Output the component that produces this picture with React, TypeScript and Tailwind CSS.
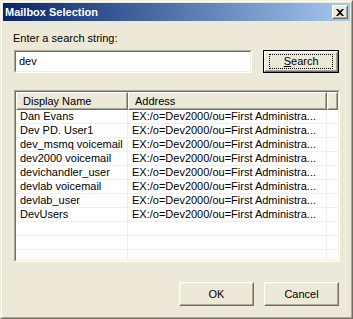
const rows = [
  'Dan Evans',
  'Dev PD. User1',
  'dev_msmq voicemail',
  'dev2000 voicemail',
  'devichandler_user',
  'devlab voicemail',
  'devlab_user',
  'DevUsers',
];

function Raised({ children, className = '' }: { children?: React.ReactNode; className?: string }) {
  // classic 3D raised edge: white / dark outer, light / shadow inner
  return (
    <div className={`border border-t-white border-l-white border-b-[#716f64] border-r-[#716f64] ${className}`}>
      <div className="flex h-full w-full items-center justify-center border border-t-[#f1efe2] border-l-[#f1efe2] border-b-[#aca899] border-r-[#aca899] bg-[#ece9d8]">
        {children}
      </div>
    </div>
  );
}

function Sunken({ children, className = '' }: { children?: React.ReactNode; className?: string }) {
  return (
    <div className={`border border-t-[#aca899] border-l-[#aca899] border-b-white border-r-white ${className}`}>
      <div className="h-full w-full overflow-hidden border border-t-[#716f64] border-l-[#716f64] border-b-[#f1efe2] border-r-[#f1efe2] bg-white">
        {children}
      </div>
    </div>
  );
}

export default function App() {
  return (
    <div
      className="h-[319px] w-[353px] overflow-hidden border border-t-[#f1efe2] border-l-[#f1efe2] border-b-[#716f64] border-r-[#716f64] text-[11px] leading-[13px] text-black"
      style={{ fontFamily: '"Liberation Sans", Arial, sans-serif' }}
    >
      <div className="flex h-full flex-col border border-t-white border-l-white border-b-[#aca899] border-r-[#aca899] bg-[#ece9d8] p-px">
        {/* Title bar */}
        <div className="flex h-[18px] items-center justify-between bg-gradient-to-r from-[#0a246a] to-[#a6caf0] pl-[2px] pr-[2px]">
          <span className="text-[11px] font-bold text-white">Mailbox Selection</span>
          <Raised className="h-[14px] w-[16px]">
            <svg width="8" height="7" viewBox="0 0 8 7">
              <path d="M0 0h2l2 2 2-2h2L5 3.5 8 7H6L4 5 2 7H0l3-3.5z" fill="#000" />
            </svg>
          </Raised>
        </div>

        {/* Body */}
        <div className="flex flex-1 flex-col pl-[10px] pr-[11px]">
          <div className="mt-[11px]">Enter a search string:</div>

          <div className="mt-[5px] ml-px flex items-center gap-[11px]">
            <Sunken className="h-[23px] w-[239px]">
              <div className="flex h-full items-center pl-[3px]">dev</div>
            </Sunken>
            <div className="h-[23px] w-[76px] border border-black">
              <Raised className="h-full w-full">
                <div className="flex h-[15px] w-[64px] items-center justify-center border border-dotted border-black">
                  <span>
                    <span className="underline">S</span>earch
                  </span>
                </div>
              </Raised>
            </div>
          </div>

          {/* List view */}
          <Sunken className="mt-[17px] ml-px h-[172px] w-[326px]">
            <div className="flex h-[18px]">
              <Raised className="h-full w-[112px]">
                <div className="w-full pl-[5px]">Display Name</div>
              </Raised>
              <Raised className="h-full w-[199px]">
                <div className="w-full pl-[5px]">Address</div>
              </Raised>
              <Raised className="h-full flex-1" />
            </div>
            {Array.from({ length: 11 }).map((_, i) => (
              <div key={i} className="flex h-[14px] border-b border-[#f0efea]">
                <div className="w-[112px] truncate border-r border-[#f0efea] pl-[4px]">{rows[i] ?? ''}</div>
                <div className="w-[199px] truncate border-r border-[#f0efea] pl-[4px]">
                  {rows[i] ? 'EX:/o=Dev2000/ou=First Administra...' : ''}
                </div>
                <div className="flex-1" />
              </div>
            ))}
          </Sunken>

          <div className="mt-[20px] flex justify-end gap-[10px]">
            <Raised className="h-[24px] w-[75px]">OK</Raised>
            <Raised className="h-[24px] w-[75px]">Cancel</Raised>
          </div>
        </div>
      </div>
    </div>
  );
}
